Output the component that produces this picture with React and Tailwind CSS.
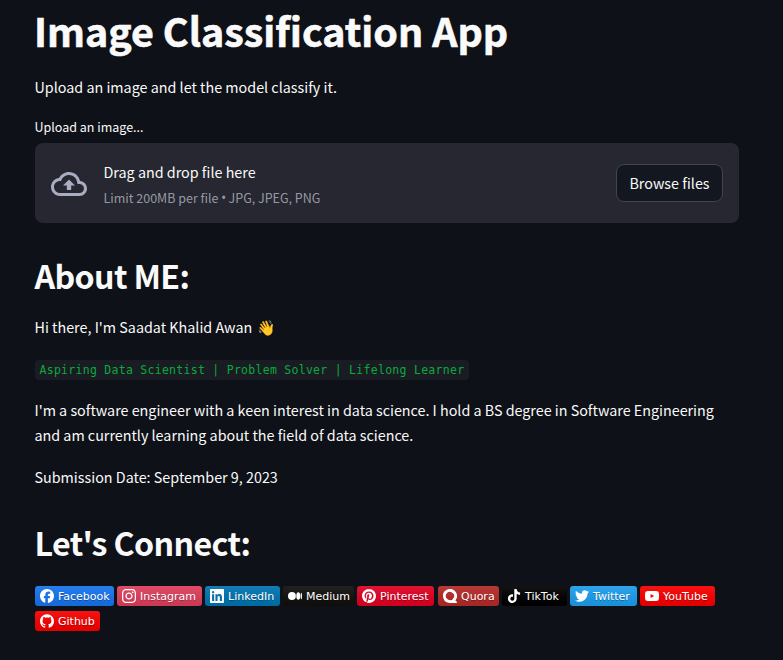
import { SiFacebook, SiInstagram, SiPinterest, SiQuora, SiTiktok, SiYoutube, SiGithub } from "react-icons/si";
import { FaTwitter } from "react-icons/fa";

function MediumIcon({ className }) {
  return (
    <svg viewBox="0 0 24 24" className={className} fill="currentColor">
      <ellipse cx="6.77" cy="12" rx="6.77" ry="6.82" />
      <ellipse cx="17.6" cy="12" rx="3.38" ry="6.42" />
      <ellipse cx="22.8" cy="12" rx="1.2" ry="5.75" />
    </svg>
  );
}

function LinkedInIcon({ className }) {
  return (
    <svg viewBox="0 0 24 24" className={className} fill="currentColor">
      <path d="M20.447 20.452h-3.554v-5.569c0-1.328-.027-3.037-1.852-3.037-1.853 0-2.136 1.445-2.136 2.939v5.667H9.351V9h3.414v1.561h.046c.477-.9 1.637-1.85 3.37-1.85 3.601 0 4.267 2.37 4.267 5.455v6.286zM5.337 7.433a2.062 2.062 0 0 1-2.063-2.065 2.064 2.064 0 1 1 2.063 2.065zm1.782 13.019H3.555V9h3.564v11.452zM22.225 0H1.771C.792 0 0 .774 0 1.729v20.542C0 23.227.792 24 1.771 24h20.451C23.2 24 24 23.227 24 22.271V1.729C24 .774 23.2 0 22.222 0h.003z" />
    </svg>
  );
}

const badges = [
  { label: "Facebook", Icon: SiFacebook, cls: "w-[79px] bg-[#1877F2]" },
  { label: "Instagram", Icon: SiInstagram, cls: "w-[85px] bg-[#E4405F]" },
  { label: "LinkedIn", Icon: LinkedInIcon, cls: "w-[75px] bg-[#0077B5]" },
  { label: "Medium", Icon: MediumIcon, cls: "w-[71px] bg-[#12100E]" },
  { label: "Pinterest", Icon: SiPinterest, cls: "w-[77px] mr-px bg-[#E60023]" },
  { label: "Quora", Icon: SiQuora, cls: "w-[61px] bg-[#B92B27]" },
  { label: "TikTok", Icon: SiTiktok, cls: "w-[65px] bg-[#000000]" },
  { label: "Twitter", Icon: FaTwitter, cls: "w-[67px] bg-[#1DA1F2]" },
  { label: "YouTube", Icon: SiYoutube, cls: "w-[75px] bg-[#FF0000]" },
  { label: "Github", Icon: SiGithub, cls: "w-[65px] bg-[#FF0000]" },
];

function Badge({ label, Icon, cls }) {
  return (
    <a className={`flex h-5 items-center gap-1 rounded-[3px] bg-linear-to-b from-[#bbbbbb1a] to-[#0000001a] pl-[5px] text-white ${cls}`}>
      <Icon className="size-[14px] shrink-0" />
      <span className="pt-px font-['DejaVu_Sans',sans-serif] text-[11px] leading-5 whitespace-nowrap [text-shadow:0_1px_0_#0101014d]">{label}</span>
    </a>
  );
}

export default function App() {
  return (
    <main className="h-[660px] w-[783px] overflow-hidden bg-[#0e1117] pt-[10px] pl-[35px] font-['Noto_Sans_CJK_SC',sans-serif] text-[14.33px] text-[#fafafa]">
      <div className="w-[704px]">
        <h1 className="-ml-px h-10 text-[39.4px] leading-10 font-bold whitespace-nowrap [-webkit-text-stroke:0.6px_#fafafa]">Image Classification App</h1>
        <p className="-ml-[0.5px] mt-[25px] leading-6">Upload an image and let the model classify it.</p>
        <p className="-ml-[0.5px] mt-[17px] text-[12.5px] leading-[22px]">Upload an image...</p>

        <section className="mt-[5px] flex h-20 items-center rounded-lg bg-[#262730] px-4">
          <svg viewBox="0 0 24 24" className="mt-px size-9 text-[#a9adc1]" fill="currentColor">
            <path d="M19.35 10.04C18.67 6.59 15.64 4 12 4 9.11 4 6.6 5.64 5.35 8.04 2.34 8.36 0 10.91 0 14c0 3.31 2.69 6 6 6h13c2.76 0 5-2.24 5-5 0-2.64-2.05-4.78-4.65-4.96zM19 18H6c-2.21 0-4-1.79-4-4 0-2.05 1.53-3.76 3.56-3.97l1.07-.11.5-.95C8.08 7.14 9.94 6 12 6c2.62 0 4.88 1.86 5.39 4.43l.3 1.5 1.53.11c1.56.1 2.78 1.41 2.78 2.96 0 1.65-1.35 3-3 3zM8 13h2.55v3h2.9v-3H16l-4-4z" />
          </svg>
          <div className="ml-[16.5px] flex-1 pt-[2px]">
            <p className="leading-[26px]">Drag and drop file here</p>
            <p className="flex h-[25px] text-[12.5px] leading-[25px] text-[#a3a8b4]/90">
              <span>Limit 200MB per file</span>
              <span className="w-[10px] text-center font-['Open_Sans',sans-serif] text-[14px]">•</span>
              <span>JPG, JPEG, PNG</span>
            </p>
          </div>
          <button className="h-[38px] w-[107px] rounded-lg border border-[#41444c] bg-[#131720] leading-9">Browse files</button>
        </section>

        <h2 className="-ml-[0.5px] mt-8 h-10 text-[32.2px] leading-10 font-semibold tracking-[-0.65px]">About ME:</h2>
        <p className="-ml-[0.5px] mt-5 h-6 leading-6">
          Hi there, I'm Saadat Khalid Awan <span className="ml-[2px] text-[14.8px]">👋</span>
        </p>
        <div className="mt-[21px] flex h-5">
          <code className="w-[434px] rounded bg-[#1a1c24] pt-px pl-[4.5px] font-['DejaVu_Sans_Mono',monospace] text-[11.5px] leading-[19px] tracking-[0.277px] whitespace-nowrap text-[#09ab3b]">Aspiring Data Scientist | Problem Solver | Lifelong Learner</code>
        </div>
        <p className="-ml-[0.5px] mt-[17px] mb-[18px] leading-[25px] tracking-[-0.01px] whitespace-nowrap">
          I'm a software engineer with a keen interest in data science. I hold a BS degree in Software Engineering
          <br />
          and am currently learning about the field of data science.
        </p>
        <p className="-ml-[0.5px] leading-6">Submission Date: September 9, 2023</p>
        <h2 className="-ml-[0.5px] mt-[33px] h-10 text-[32.2px] leading-10 font-semibold tracking-[-0.65px]">Let's Connect:</h2>
        <nav className="mt-6 flex flex-wrap gap-x-[3px] gap-y-[5px]">
          {badges.map((b) => (
            <Badge key={b.label} {...b} />
          ))}
        </nav>
      </div>
    </main>
  );
}
